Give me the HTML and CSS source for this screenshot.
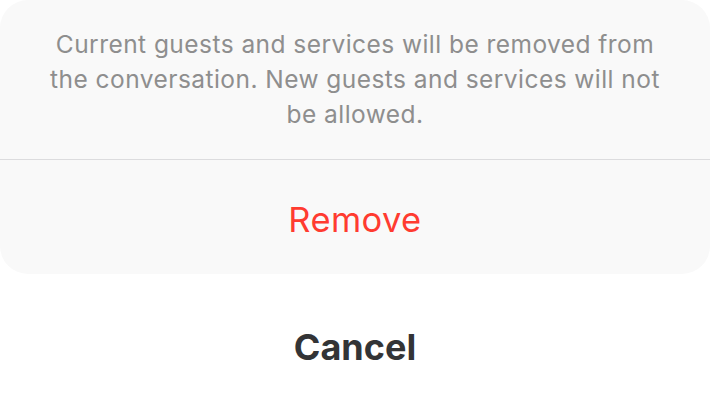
FILE: index.html
```html
<!DOCTYPE html>
<html>
<head>
<meta charset="utf-8">
<link rel="stylesheet" href="styles.css">
</head>
<body>
<div class="sheet">
  <div class="group">
    <div class="message">Current guests and services will be removed from the conversation. New guests and services will not be allowed.</div>
    <div class="action destructive">Remove</div>
  </div>
  <div class="action cancel">Cancel</div>
</div>
</body>
</html>
```

FILE: styles.css
```css
html, body {
  margin: 0;
  padding: 0;
  background: #ffffff;
}
.sheet {
  width: 710px;
  height: 405px;
  display: flex;
  flex-direction: column;
  font-family: Inter, Roboto, "Liberation Sans", sans-serif;
}
.group {
  background: #f9f9f9;
  border-radius: 28px;
  display: flex;
  flex-direction: column;
}
.message {
  box-sizing: border-box;
  height: 160px;
  padding: 27px 44px 0;
  border-bottom: 1px solid #dcdcde;
  text-align: center;
  font-size: 24.5px;
  letter-spacing: 0.45px;
  line-height: 35px;
  color: #8e8e8e;
}
.action {
  display: flex;
  align-items: center;
  justify-content: center;
}
.destructive {
  box-sizing: border-box;
  height: 114px;
  padding-top: 4px;
  color: #ff3b30;
  font-size: 34.5px;
  letter-spacing: 0.4px;
}
.cancel {
  flex: 1;
  color: #333436;
  font-size: 36px;
  font-weight: 700;
  padding-top: 14px;
}
```
